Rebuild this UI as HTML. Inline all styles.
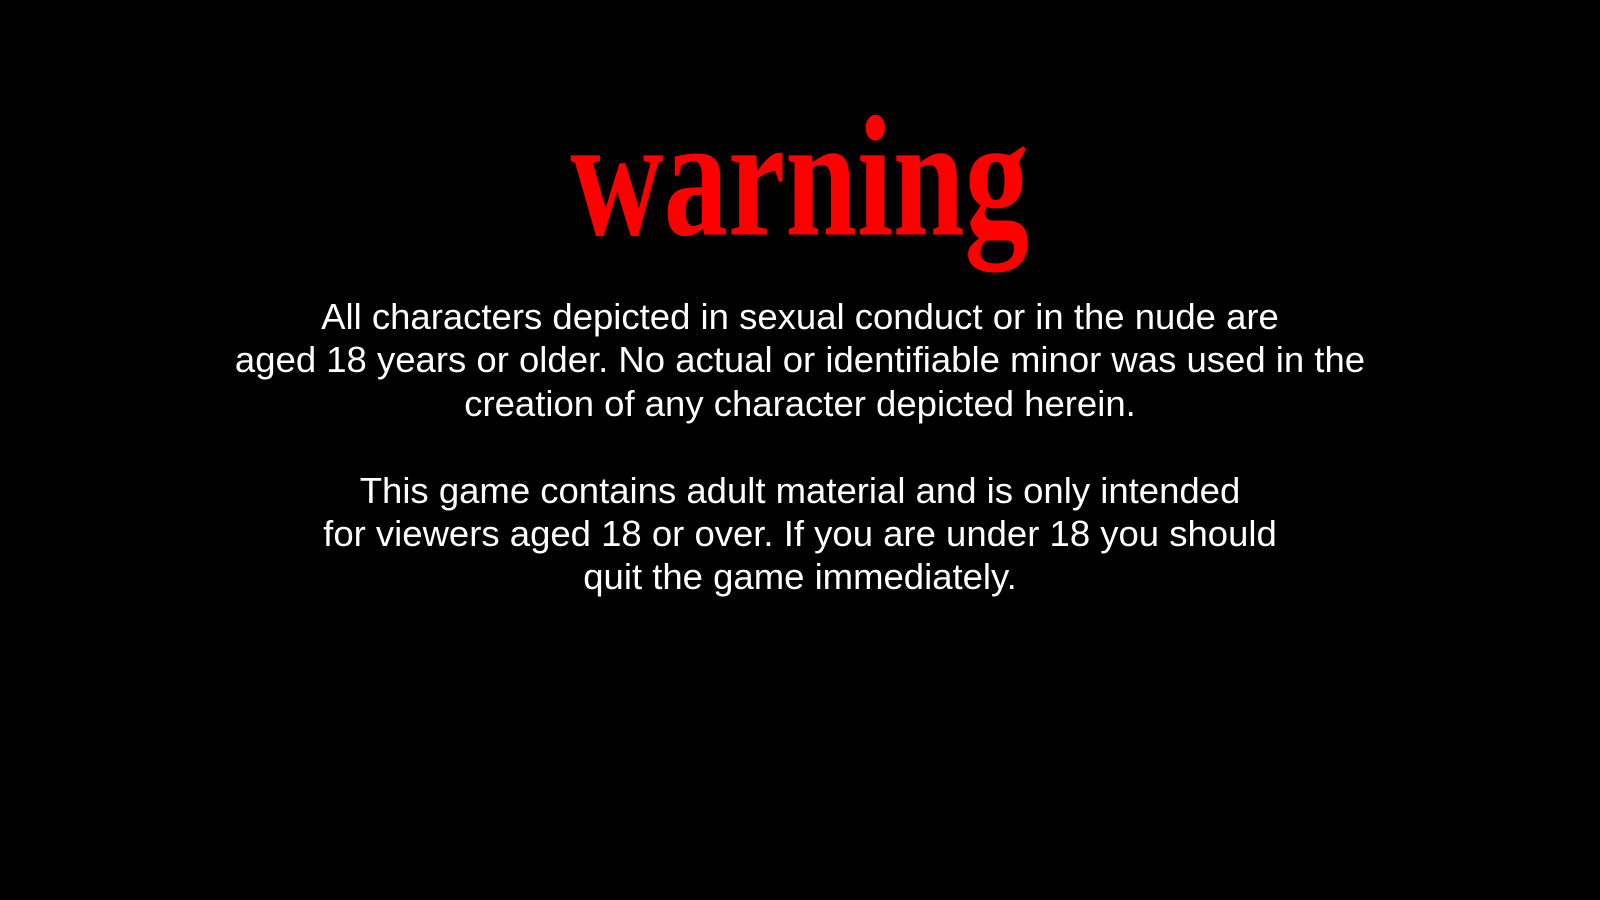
<!DOCTYPE html>
<html><head><meta charset="utf-8"><style>
html,body{margin:0;padding:0;background:#000;width:1600px;height:900px;overflow:hidden}
.w{position:absolute;left:0;width:1600px;top:102px;text-align:center;color:#f00;font-family:"Liberation Serif",serif;font-weight:bold;font-size:150px;line-height:150px;}
.w span{display:inline-block;transform:scale(0.86,1.15);transform-origin:center}
.t{position:absolute;left:0;width:1600px;top:295px;text-align:center;color:#fff;font-family:"Liberation Sans",sans-serif;font-size:36.5px;line-height:43.4px}
</style></head><body>
<div class="w"><span>warning</span></div>
<div class="t">All characters depicted in sexual conduct or in the nude are<br>aged 18 years or older. No actual or identifiable minor was used in the<br>creation of any character depicted herein.<br><br>This game contains adult material and is only intended<br>for viewers aged 18 or over. If you are under 18 you should<br>quit the game immediately.</div>
</body></html>
